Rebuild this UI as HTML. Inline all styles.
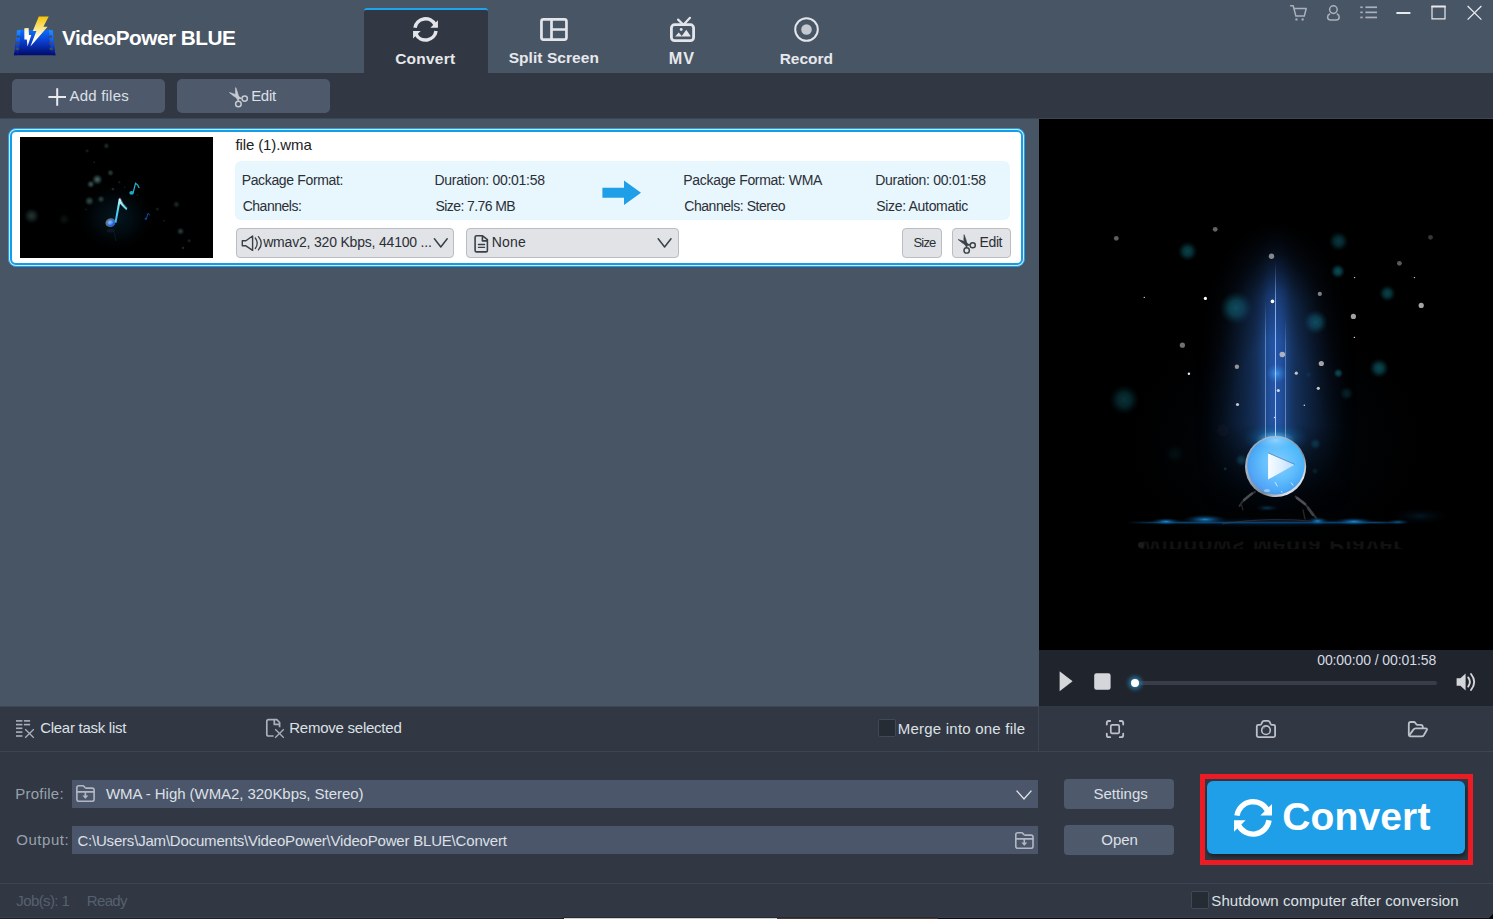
<!DOCTYPE html>
<html><head><meta charset="utf-8"><title>VideoPower BLUE</title>
<style>
html,body{margin:0;padding:0}
body{width:1493px;height:919px;position:relative;overflow:hidden;background:#313843;font-family:"Liberation Sans",sans-serif}
.a{position:absolute}
.t{position:absolute;white-space:pre;line-height:normal}
.btn{position:absolute;background:#4e596c;border-radius:5px}
.lbtn{position:absolute;background:#e1e3e7;border:1px solid #b9bdc4;border-radius:4px;box-sizing:border-box}
svg{position:absolute;left:0;top:0;overflow:visible}
</style></head>
<body>

<div id="titlebar">
<div class="a" style="left:0;top:0;width:1493px;height:73px;background:#485565"></div>
<div class="a" style="left:364px;top:8px;width:124px;height:65px;background:#313843;border-top:2px solid #1ca4ef;border-radius:3px 3px 0 0;box-sizing:border-box"></div>
<div class="t" style="left:62.00px;top:25.70px;font-size:20.8px;color:#ffffff;letter-spacing:-0.513px;font-weight:bold;">VideoPower BLUE</div>
<div class="t" style="left:395.20px;top:50.00px;font-size:15.5px;color:#e6e8ec;letter-spacing:0.233px;font-weight:bold;">Convert</div>
<div class="t" style="left:508.70px;top:49.00px;font-size:15.5px;color:#e6e8ec;letter-spacing:0.062px;font-weight:bold;">Split Screen</div>
<div class="t" style="left:668.80px;top:49.00px;font-size:16.2px;color:#e6e8ec;letter-spacing:1.016px;font-weight:bold;">MV</div>
<div class="t" style="left:779.70px;top:50.00px;font-size:15.5px;color:#e6e8ec;letter-spacing:-0.007px;font-weight:bold;">Record</div>
</div>
<div id="toolbar">
<div class="btn" style="left:12px;top:79px;width:153px;height:34px"></div>
<div class="btn" style="left:177px;top:79px;width:153px;height:34px"></div>
<div class="t" style="left:69.50px;top:87.00px;font-size:15px;color:#dde0e6;letter-spacing:0.209px;">Add files</div>
<div class="t" style="left:251.20px;top:87.00px;font-size:15px;color:#dde0e6;letter-spacing:-0.327px;">Edit</div>
</div>
<div id="tasklist">
<div class="a" style="left:0;top:118px;width:1493px;height:1px;background:#3c4654"></div>
<div class="a" style="left:0;top:119px;width:1039px;height:587px;background:#485565"></div>
<div class="a" style="left:0;top:706px;width:1038px;height:1px;background:#3c4654"></div>

<!-- file card -->
<div class="a" style="left:8px;top:128px;width:1017px;height:139px;box-sizing:border-box;border:1px solid #1e9fe8;border-radius:8px;background:#c9e8fa"></div>
<div class="a" style="left:10px;top:130px;width:1013px;height:135px;box-sizing:border-box;border:2px solid #169de7;border-radius:6px;background:#fff"></div>
<div class="a" style="left:20px;top:137px;width:193px;height:121px;background:#000;overflow:hidden"><svg width="193" height="121" viewBox="0 0 193 121">
<defs>
<radialGradient id="tbk"><stop offset="0" stop-color="#5c8a88"/><stop offset=".45" stop-color="#456b6a" stop-opacity=".75"/><stop offset="1" stop-color="#2a4645" stop-opacity="0"/></radialGradient>
<radialGradient id="tglow"><stop offset="0" stop-color="#0a3550" stop-opacity=".42"/><stop offset=".5" stop-color="#05202f" stop-opacity=".3"/><stop offset="1" stop-color="#000" stop-opacity="0"/></radialGradient>
<linearGradient id="nstem" x1="0" y1="1" x2="0" y2="0"><stop offset="0" stop-color="#38b8f0"/><stop offset=".6" stop-color="#56e0f6"/><stop offset="1" stop-color="#dffaff"/></linearGradient>
<radialGradient id="nhead" cx=".4" cy=".35"><stop offset="0" stop-color="#8fc4ff"/><stop offset=".7" stop-color="#3f86f0"/><stop offset="1" stop-color="#2a5fd0"/></radialGradient>
</defs>
<rect width="193" height="121" fill="#000"/>
<ellipse cx="96" cy="80" rx="40" ry="36" fill="url(#tglow)"/>
<circle cx="86.4" cy="8.9" r="3.4" fill="url(#tbk)" opacity="0.36"/><circle cx="67.1" cy="13.9" r="2.2" fill="url(#tbk)" opacity="0.28"/><circle cx="74.2" cy="25.2" r="1.5" fill="url(#tbk)" opacity="0.28"/><circle cx="90.5" cy="35.8" r="3.6" fill="url(#tbk)" opacity="0.48"/><circle cx="77.3" cy="42.5" r="5.6" fill="url(#tbk)" opacity="0.76"/><circle cx="70.8" cy="47.2" r="4.2" fill="url(#tbk)" opacity="0.64"/><circle cx="99.3" cy="45.2" r="1.8" fill="url(#tbk)" opacity="0.28"/><circle cx="92.9" cy="52.1" r="1.9" fill="url(#tbk)" opacity="0.44"/><circle cx="69.4" cy="64" r="5" fill="url(#tbk)" opacity="0.56"/><circle cx="81" cy="62.2" r="4" fill="url(#tbk)" opacity="0.48"/><circle cx="66" cy="72.5" r="1.5" fill="url(#tbk)" opacity="0.24"/><circle cx="11.6" cy="78.9" r="8" fill="url(#tbk)" opacity="0.4"/><circle cx="44.2" cy="82.3" r="6" fill="url(#tbk)" opacity="0.14"/><circle cx="156.4" cy="67.4" r="3.8" fill="url(#tbk)" opacity="0.32"/><circle cx="137.4" cy="72.1" r="2.2" fill="url(#tbk)" opacity="0.28"/><circle cx="144.2" cy="83.7" r="1.5" fill="url(#tbk)" opacity="0.24"/><circle cx="160.5" cy="94.3" r="4" fill="url(#tbk)" opacity="0.48"/><circle cx="169.1" cy="103.8" r="2.2" fill="url(#tbk)" opacity="0.32"/><circle cx="163" cy="110.9" r="1.9" fill="url(#tbk)" opacity="0.4"/><circle cx="117.4" cy="58.1" r="1.3" fill="url(#tbk)" opacity="0.24"/><circle cx="104.6" cy="50.2" r="1.2" fill="url(#tbk)" opacity="0.24"/>
<!-- small notes -->
<g fill="none" stroke="#1fb4cf" stroke-width="1.3" stroke-linecap="round"><path d="M113.200 55.400 L115.600 46.200 Q118.200 47.600 119 50.600"/></g>
<ellipse cx="111.600" cy="55.900" rx="2.300" ry="1.800" fill="#1aa9c6"/>
<path d="M126.600 81.200 L128 76.200 Q129.200 77 129.600 78.400" fill="none" stroke="#0c4fa6" stroke-width="1"/>
<ellipse cx="125.900" cy="81.700" rx="1.300" ry="1" fill="#0c4fa6"/>
<!-- main note -->
<ellipse cx="90.400" cy="85.600" rx="5" ry="4.300" fill="#6d6f74" transform="rotate(-18 90.4 85.6)"/>
<ellipse cx="91" cy="86" rx="4" ry="3.300" fill="url(#nhead)" transform="rotate(-18 91 86)"/>
<path d="M94.600 85.200 L98.800 61.600 L100.400 61.600 Q101.600 66.400 107.200 71.400 L106.400 73.200 Q102.200 69.400 100 66.800 L96.400 86 Z" fill="url(#nstem)"/>
<path d="M99 61.400 Q100.200 60.600 100.800 62 Q102 66.400 107.400 71.200" fill="none" stroke="#8d9297" stroke-width=".8" opacity=".8"/>
<ellipse cx="90.800" cy="93.600" rx="4.200" ry="2" fill="#0b1a24" opacity=".9"/>
<path d="M94 95 L96.200 104" stroke="#08131b" stroke-width="1.400"/>
</svg></div>
<div class="a" style="left:235px;top:161px;width:775px;height:59px;background:#e8f6fd;border-radius:6px"></div>
<div class="lbtn" style="left:236px;top:228px;width:218px;height:30px"></div>
<div class="lbtn" style="left:466px;top:228px;width:213px;height:30px"></div>
<div class="lbtn" style="left:902px;top:228px;width:40px;height:30px"></div>
<div class="lbtn" style="left:952px;top:228px;width:59px;height:30px"></div>

<div class="t" style="left:235.40px;top:135.50px;font-size:15px;color:#222;letter-spacing:-0.106px;">file (1).wma</div>
<div class="t" style="left:241.70px;top:172.00px;font-size:14px;color:#2b2f36;letter-spacing:-0.351px;">Package Format:</div>
<div class="t" style="left:242.70px;top:198.00px;font-size:14px;color:#2b2f36;letter-spacing:-0.481px;">Channels:</div>
<div class="t" style="left:434.50px;top:172.00px;font-size:14px;color:#2b2f36;letter-spacing:-0.277px;">Duration: 00:01:58</div>
<div class="t" style="left:435.50px;top:198.00px;font-size:14px;color:#2b2f36;letter-spacing:-0.584px;">Size: 7.76 MB</div>
<div class="t" style="left:683.30px;top:172.00px;font-size:14px;color:#2b2f36;letter-spacing:-0.315px;">Package Format: WMA</div>
<div class="t" style="left:684.30px;top:198.00px;font-size:14px;color:#2b2f36;letter-spacing:-0.460px;">Channels: Stereo</div>
<div class="t" style="left:875.20px;top:172.00px;font-size:14px;color:#2b2f36;letter-spacing:-0.259px;">Duration: 00:01:58</div>
<div class="t" style="left:876.20px;top:198.00px;font-size:14px;color:#2b2f36;letter-spacing:-0.312px;">Size: Automatic</div>
<div class="t" style="left:263.20px;top:233.50px;font-size:14px;color:#2b2f36;letter-spacing:-0.194px;">wmav2, 320 Kbps, 44100 ...</div>
<div class="t" style="left:491.70px;top:233.50px;font-size:14px;color:#2b2f36;letter-spacing:0.206px;">None</div>
<div class="t" style="left:913.40px;top:234.50px;font-size:13px;color:#2b2f36;letter-spacing:-0.786px;">Size</div>
<div class="t" style="left:979.60px;top:233.50px;font-size:14px;color:#2b2f36;letter-spacing:-0.411px;">Edit</div>
</div>
<div id="player">
<!-- preview -->
<div class="a" style="left:1039px;top:119px;width:454px;height:531px;background:#000;overflow:hidden"><div class="a" style="left:0;top:-1px;width:454px;height:532px"><svg width="454" height="532" viewBox="0 0 454 532">
<defs>
<radialGradient id="pbk"><stop offset="0" stop-color="#11707c"/><stop offset=".45" stop-color="#0e5c68" stop-opacity=".85"/><stop offset="1" stop-color="#06343c" stop-opacity="0"/></radialGradient>
<linearGradient id="bgs" x1="0" y1="0" x2="1" y2="0"><stop offset="0.0000" stop-color="#183868" stop-opacity="0.000"/><stop offset="0.0156" stop-color="#183868" stop-opacity="0.005"/><stop offset="0.0312" stop-color="#183868" stop-opacity="0.012"/><stop offset="0.0469" stop-color="#183868" stop-opacity="0.022"/><stop offset="0.0625" stop-color="#183868" stop-opacity="0.036"/><stop offset="0.0781" stop-color="#183868" stop-opacity="0.054"/><stop offset="0.0938" stop-color="#183868" stop-opacity="0.077"/><stop offset="0.1094" stop-color="#183868" stop-opacity="0.107"/><stop offset="0.1250" stop-color="#183868" stop-opacity="0.144"/><stop offset="0.1406" stop-color="#183868" stop-opacity="0.169"/><stop offset="0.1562" stop-color="#183868" stop-opacity="0.196"/><stop offset="0.1719" stop-color="#183868" stop-opacity="0.227"/><stop offset="0.1875" stop-color="#183868" stop-opacity="0.260"/><stop offset="0.2031" stop-color="#183868" stop-opacity="0.297"/><stop offset="0.2188" stop-color="#183868" stop-opacity="0.336"/><stop offset="0.2344" stop-color="#183868" stop-opacity="0.378"/><stop offset="0.2500" stop-color="#183868" stop-opacity="0.423"/><stop offset="0.2656" stop-color="#183868" stop-opacity="0.469"/><stop offset="0.2812" stop-color="#183868" stop-opacity="0.517"/><stop offset="0.2969" stop-color="#183868" stop-opacity="0.566"/><stop offset="0.3125" stop-color="#183868" stop-opacity="0.616"/><stop offset="0.3281" stop-color="#183868" stop-opacity="0.666"/><stop offset="0.3438" stop-color="#183868" stop-opacity="0.714"/><stop offset="0.3594" stop-color="#183868" stop-opacity="0.761"/><stop offset="0.3750" stop-color="#183868" stop-opacity="0.806"/><stop offset="0.3906" stop-color="#183868" stop-opacity="0.848"/><stop offset="0.4062" stop-color="#183868" stop-opacity="0.886"/><stop offset="0.4219" stop-color="#183868" stop-opacity="0.919"/><stop offset="0.4375" stop-color="#183868" stop-opacity="0.948"/><stop offset="0.4531" stop-color="#183868" stop-opacity="0.970"/><stop offset="0.4688" stop-color="#183868" stop-opacity="0.987"/><stop offset="0.4844" stop-color="#183868" stop-opacity="0.997"/><stop offset="0.5000" stop-color="#183868" stop-opacity="1.000"/><stop offset="0.5156" stop-color="#183868" stop-opacity="0.997"/><stop offset="0.5312" stop-color="#183868" stop-opacity="0.987"/><stop offset="0.5469" stop-color="#183868" stop-opacity="0.970"/><stop offset="0.5625" stop-color="#183868" stop-opacity="0.948"/><stop offset="0.5781" stop-color="#183868" stop-opacity="0.919"/><stop offset="0.5938" stop-color="#183868" stop-opacity="0.886"/><stop offset="0.6094" stop-color="#183868" stop-opacity="0.848"/><stop offset="0.6250" stop-color="#183868" stop-opacity="0.806"/><stop offset="0.6406" stop-color="#183868" stop-opacity="0.761"/><stop offset="0.6562" stop-color="#183868" stop-opacity="0.714"/><stop offset="0.6719" stop-color="#183868" stop-opacity="0.666"/><stop offset="0.6875" stop-color="#183868" stop-opacity="0.616"/><stop offset="0.7031" stop-color="#183868" stop-opacity="0.566"/><stop offset="0.7188" stop-color="#183868" stop-opacity="0.517"/><stop offset="0.7344" stop-color="#183868" stop-opacity="0.469"/><stop offset="0.7500" stop-color="#183868" stop-opacity="0.423"/><stop offset="0.7656" stop-color="#183868" stop-opacity="0.378"/><stop offset="0.7812" stop-color="#183868" stop-opacity="0.336"/><stop offset="0.7969" stop-color="#183868" stop-opacity="0.297"/><stop offset="0.8125" stop-color="#183868" stop-opacity="0.260"/><stop offset="0.8281" stop-color="#183868" stop-opacity="0.227"/><stop offset="0.8438" stop-color="#183868" stop-opacity="0.196"/><stop offset="0.8594" stop-color="#183868" stop-opacity="0.169"/><stop offset="0.8750" stop-color="#183868" stop-opacity="0.144"/><stop offset="0.8906" stop-color="#183868" stop-opacity="0.107"/><stop offset="0.9062" stop-color="#183868" stop-opacity="0.077"/><stop offset="0.9219" stop-color="#183868" stop-opacity="0.054"/><stop offset="0.9375" stop-color="#183868" stop-opacity="0.036"/><stop offset="0.9531" stop-color="#183868" stop-opacity="0.022"/><stop offset="0.9688" stop-color="#183868" stop-opacity="0.012"/><stop offset="0.9844" stop-color="#183868" stop-opacity="0.005"/><stop offset="1.0000" stop-color="#183868" stop-opacity="0.000"/></linearGradient>
<linearGradient id="bgc" x1="0" y1="0" x2="1" y2="0"><stop offset="0.0000" stop-color="#2457ac" stop-opacity="0.000"/><stop offset="0.0156" stop-color="#2457ac" stop-opacity="0.000"/><stop offset="0.0312" stop-color="#2457ac" stop-opacity="0.000"/><stop offset="0.0469" stop-color="#2457ac" stop-opacity="0.000"/><stop offset="0.0625" stop-color="#2457ac" stop-opacity="0.001"/><stop offset="0.0781" stop-color="#2457ac" stop-opacity="0.002"/><stop offset="0.0938" stop-color="#2457ac" stop-opacity="0.003"/><stop offset="0.1094" stop-color="#2457ac" stop-opacity="0.006"/><stop offset="0.1250" stop-color="#2457ac" stop-opacity="0.011"/><stop offset="0.1406" stop-color="#2457ac" stop-opacity="0.017"/><stop offset="0.1562" stop-color="#2457ac" stop-opacity="0.026"/><stop offset="0.1719" stop-color="#2457ac" stop-opacity="0.038"/><stop offset="0.1875" stop-color="#2457ac" stop-opacity="0.053"/><stop offset="0.2031" stop-color="#2457ac" stop-opacity="0.074"/><stop offset="0.2188" stop-color="#2457ac" stop-opacity="0.100"/><stop offset="0.2344" stop-color="#2457ac" stop-opacity="0.133"/><stop offset="0.2500" stop-color="#2457ac" stop-opacity="0.172"/><stop offset="0.2656" stop-color="#2457ac" stop-opacity="0.218"/><stop offset="0.2812" stop-color="#2457ac" stop-opacity="0.271"/><stop offset="0.2969" stop-color="#2457ac" stop-opacity="0.329"/><stop offset="0.3125" stop-color="#2457ac" stop-opacity="0.393"/><stop offset="0.3281" stop-color="#2457ac" stop-opacity="0.459"/><stop offset="0.3438" stop-color="#2457ac" stop-opacity="0.527"/><stop offset="0.3594" stop-color="#2457ac" stop-opacity="0.594"/><stop offset="0.3750" stop-color="#2457ac" stop-opacity="0.658"/><stop offset="0.3906" stop-color="#2457ac" stop-opacity="0.717"/><stop offset="0.4062" stop-color="#2457ac" stop-opacity="0.769"/><stop offset="0.4219" stop-color="#2457ac" stop-opacity="0.813"/><stop offset="0.4375" stop-color="#2457ac" stop-opacity="0.848"/><stop offset="0.4531" stop-color="#2457ac" stop-opacity="0.874"/><stop offset="0.4688" stop-color="#2457ac" stop-opacity="0.890"/><stop offset="0.4844" stop-color="#2457ac" stop-opacity="0.898"/><stop offset="0.5000" stop-color="#2457ac" stop-opacity="0.900"/><stop offset="0.5156" stop-color="#2457ac" stop-opacity="0.898"/><stop offset="0.5312" stop-color="#2457ac" stop-opacity="0.890"/><stop offset="0.5469" stop-color="#2457ac" stop-opacity="0.874"/><stop offset="0.5625" stop-color="#2457ac" stop-opacity="0.848"/><stop offset="0.5781" stop-color="#2457ac" stop-opacity="0.813"/><stop offset="0.5938" stop-color="#2457ac" stop-opacity="0.769"/><stop offset="0.6094" stop-color="#2457ac" stop-opacity="0.717"/><stop offset="0.6250" stop-color="#2457ac" stop-opacity="0.658"/><stop offset="0.6406" stop-color="#2457ac" stop-opacity="0.594"/><stop offset="0.6562" stop-color="#2457ac" stop-opacity="0.527"/><stop offset="0.6719" stop-color="#2457ac" stop-opacity="0.459"/><stop offset="0.6875" stop-color="#2457ac" stop-opacity="0.393"/><stop offset="0.7031" stop-color="#2457ac" stop-opacity="0.329"/><stop offset="0.7188" stop-color="#2457ac" stop-opacity="0.271"/><stop offset="0.7344" stop-color="#2457ac" stop-opacity="0.218"/><stop offset="0.7500" stop-color="#2457ac" stop-opacity="0.172"/><stop offset="0.7656" stop-color="#2457ac" stop-opacity="0.133"/><stop offset="0.7812" stop-color="#2457ac" stop-opacity="0.100"/><stop offset="0.7969" stop-color="#2457ac" stop-opacity="0.074"/><stop offset="0.8125" stop-color="#2457ac" stop-opacity="0.053"/><stop offset="0.8281" stop-color="#2457ac" stop-opacity="0.038"/><stop offset="0.8438" stop-color="#2457ac" stop-opacity="0.026"/><stop offset="0.8594" stop-color="#2457ac" stop-opacity="0.017"/><stop offset="0.8750" stop-color="#2457ac" stop-opacity="0.011"/><stop offset="0.8906" stop-color="#2457ac" stop-opacity="0.006"/><stop offset="0.9062" stop-color="#2457ac" stop-opacity="0.003"/><stop offset="0.9219" stop-color="#2457ac" stop-opacity="0.002"/><stop offset="0.9375" stop-color="#2457ac" stop-opacity="0.001"/><stop offset="0.9531" stop-color="#2457ac" stop-opacity="0.000"/><stop offset="0.9688" stop-color="#2457ac" stop-opacity="0.000"/><stop offset="0.9844" stop-color="#2457ac" stop-opacity="0.000"/><stop offset="1.0000" stop-color="#2457ac" stop-opacity="0.000"/></linearGradient>
<linearGradient id="vfade" x1="0" y1="0" x2="0" y2="1"><stop offset="0" stop-color="#fff" stop-opacity="0"/><stop offset=".06" stop-color="#fff" stop-opacity=".35"/><stop offset=".16" stop-color="#fff" stop-opacity=".8"/><stop offset=".26" stop-color="#fff" stop-opacity="1"/><stop offset=".7" stop-color="#fff" stop-opacity="1"/><stop offset=".78" stop-color="#fff" stop-opacity=".6"/><stop offset=".86" stop-color="#fff" stop-opacity=".25"/><stop offset=".93" stop-color="#fff" stop-opacity=".07"/><stop offset="1" stop-color="#fff" stop-opacity="0"/></linearGradient>
<radialGradient id="dome"><stop offset="0" stop-color="#fff" stop-opacity="1"/><stop offset=".5" stop-color="#fff" stop-opacity="1"/><stop offset=".68" stop-color="#fff" stop-opacity=".72"/><stop offset=".84" stop-color="#fff" stop-opacity=".28"/><stop offset="1" stop-color="#fff" stop-opacity="0"/></radialGradient>
<mask id="mdome" maskUnits="userSpaceOnUse" x="0" y="0" width="454" height="532"><ellipse cx="236.5" cy="345" rx="100" ry="245" fill="url(#dome)"/></mask>
<mask id="mfade" maskUnits="userSpaceOnUse" x="0" y="0" width="454" height="532"><rect x="152.5" y="96" width="168" height="300" fill="url(#vfade)"/></mask>
<linearGradient id="lfade" x1="0" y1="0" x2="0" y2="1"><stop offset="0" stop-color="#a8c8ff" stop-opacity="0"/><stop offset=".25" stop-color="#a8c8ff" stop-opacity=".75"/><stop offset="1" stop-color="#c4dcff" stop-opacity=".9"/></linearGradient>
<radialGradient id="ball" cx=".54" cy=".46" r=".58"><stop offset="0" stop-color="#8ccfff"/><stop offset=".5" stop-color="#62bffd"/><stop offset=".82" stop-color="#48a8f6"/><stop offset="1" stop-color="#3590ea"/></radialGradient>
<linearGradient id="ballc" x1="0" y1="1" x2="1" y2="0"><stop offset="0" stop-color="#7a9cf6" stop-opacity=".55"/><stop offset=".5" stop-color="#5ab4fb" stop-opacity="0"/><stop offset="1" stop-color="#3fd0ff" stop-opacity=".55"/></linearGradient>
<linearGradient id="rim" x1="0" y1="0" x2="1" y2="1"><stop offset="0" stop-color="#8a98a8"/><stop offset=".3" stop-color="#aab4be"/><stop offset=".62" stop-color="#7c8690"/><stop offset=".82" stop-color="#e4e8ec"/><stop offset="1" stop-color="#5a5e64"/></linearGradient>
<linearGradient id="tri" x1="0" y1="0" x2="1" y2="0"><stop offset="0" stop-color="#ffffff" stop-opacity=".95"/><stop offset=".5" stop-color="#e4f2ff" stop-opacity=".92"/><stop offset="1" stop-color="#bfe0ff" stop-opacity=".9"/></linearGradient>
<radialGradient id="hglow"><stop offset="0" stop-color="#2094dc" stop-opacity=".9"/><stop offset=".45" stop-color="#0e62a0" stop-opacity=".5"/><stop offset="1" stop-color="#052848" stop-opacity="0"/></radialGradient><radialGradient id="hsoft"><stop offset="0" stop-color="#0a3c6c" stop-opacity=".5"/><stop offset="1" stop-color="#041830" stop-opacity="0"/></radialGradient><linearGradient id="hline" x1="0" y1="0" x2="1" y2="0"><stop offset="0" stop-color="#0c5a94" stop-opacity="0"/><stop offset=".12" stop-color="#0c5a94" stop-opacity=".8"/><stop offset=".88" stop-color="#0c5a94" stop-opacity=".8"/><stop offset="1" stop-color="#0c5a94" stop-opacity="0"/></linearGradient>
<radialGradient id="topg"><stop offset="0" stop-color="#c8ecff" stop-opacity=".55"/><stop offset="1" stop-color="#8fd0ff" stop-opacity="0"/></radialGradient><radialGradient id="spot"><stop offset="0" stop-color="#4aa4f4" stop-opacity=".8"/><stop offset="1" stop-color="#2a7ae0" stop-opacity="0"/></radialGradient>
<radialGradient id="cyg"><stop offset="0" stop-color="#2aa0e0" stop-opacity=".75"/><stop offset=".6" stop-color="#1470b0" stop-opacity=".3"/><stop offset="1" stop-color="#0a4070" stop-opacity="0"/></radialGradient>
<radialGradient id="amb"><stop offset="0" stop-color="#061626" stop-opacity=".45"/><stop offset="1" stop-color="#020810" stop-opacity="0"/></radialGradient>
</defs>
<rect width="454" height="532" fill="#000"/>
<ellipse cx="236.5" cy="322" rx="150" ry="120" fill="url(#amb)"/>
<circle cx="148.6" cy="133.3" r="10" fill="url(#pbk)" opacity="0.6"/><circle cx="299.6" cy="123.3" r="10" fill="url(#pbk)" opacity="0.5"/><circle cx="298.8" cy="153.3" r="7.5" fill="url(#pbk)" opacity="0.7"/><circle cx="348.4" cy="175.4" r="8.5" fill="url(#pbk)" opacity="0.6"/><circle cx="197.4" cy="190.1" r="17" fill="url(#pbk)" opacity="0.75"/><circle cx="276.3" cy="204.2" r="12.5" fill="url(#pbk)" opacity="0.75"/><circle cx="340.1" cy="250.2" r="10" fill="url(#pbk)" opacity="0.65"/><circle cx="299.3" cy="255.2" r="5" fill="url(#pbk)" opacity="0.7"/><circle cx="85.3" cy="281.8" r="15" fill="url(#pbk)" opacity="0.45"/><circle cx="307.6" cy="275.5" r="7" fill="url(#pbk)" opacity="0.3"/><circle cx="269.5" cy="256.7" r="3.5" fill="url(#pbk)" opacity="0.3"/><circle cx="276.3" cy="325.8" r="6" fill="url(#pbk)" opacity="0.45"/><circle cx="202.4" cy="342" r="6.5" fill="url(#pbk)" opacity="0.5"/><circle cx="136" cy="335.8" r="10" fill="url(#pbk)" opacity="0.12"/><circle cx="186.2" cy="350.8" r="2" fill="url(#pbk)" opacity="0.5"/><circle cx="276" cy="353" r="3.5" fill="url(#pbk)" opacity="0.25"/>
<circle cx="183.6" cy="312.5" r="6" fill="#101014" opacity=".5"/>
<!-- beam -->
<g mask="url(#mdome)"><g mask="url(#mfade)"><rect x="152.5" y="96" width="168" height="300" fill="url(#bgs)"/><rect x="206.5" y="96" width="60" height="300" fill="url(#bgc)"/></g></g>
<circle cx="237.5" cy="255.5" r="10" fill="url(#spot)"/>
<ellipse cx="236.5" cy="320" rx="34" ry="16" fill="url(#cyg)"/>
<rect x="236.0" y="144" width="1" height="176" fill="url(#lfade)"/>
<rect x="226.1" y="182" width=".8" height="142" fill="url(#lfade)" opacity=".7"/>
<rect x="246.1" y="200" width=".8" height="124" fill="url(#lfade)" opacity=".65"/>
<circle cx="77.3" cy="120.3" r="2.4" fill="#5e5e5e"/><circle cx="176.2" cy="111.3" r="2.4" fill="#646464"/><circle cx="232.5" cy="138.3" r="2.7" fill="#86868c"/><circle cx="391.5" cy="119.3" r="2.4" fill="#363636"/><circle cx="360.4" cy="145.3" r="2.4" fill="#5a5a5a"/><circle cx="315.6" cy="159.6" r="0.7" fill="#ddd"/><circle cx="375.4" cy="159.6" r="0.7" fill="#ddd"/><circle cx="105.3" cy="179.4" r="0.7" fill="#ccc"/><circle cx="166.4" cy="180.4" r="1.6" fill="#fff"/><circle cx="233.5" cy="183.4" r="1.8" fill="#fff"/><circle cx="280.8" cy="175.9" r="2.1" fill="#808080"/><circle cx="382.2" cy="187.4" r="2.6" fill="#a4a4a4"/><circle cx="314.4" cy="198.4" r="2.6" fill="#a2a2a2"/><circle cx="315.4" cy="219.4" r="0.7" fill="#ddd"/><circle cx="143.4" cy="227.2" r="2.6" fill="#707070"/><circle cx="243.3" cy="236.5" r="2.8" fill="#aeb2c0"/><circle cx="282.3" cy="245.5" r="2.6" fill="#a4a4a4"/><circle cx="197.9" cy="248.7" r="2.2" fill="#949494"/><circle cx="149.9" cy="255.7" r="1.2" fill="#f0f0f0"/><circle cx="257.3" cy="255.2" r="1.6" fill="#c6c6c6"/><circle cx="239.3" cy="272.5" r="1.6" fill="#d0d4e0"/><circle cx="279.3" cy="270.3" r="1.6" fill="#c6c6c6"/><circle cx="198.5" cy="286.5" r="1.6" fill="#c6c6c6"/><circle cx="265.3" cy="287.3" r="0.7" fill="#cfe"/><circle cx="235.5" cy="299.5" r="0.7" fill="#dde"/>
<!-- horizon -->
<rect x="88" y="403.70000000000005" width="282" height="1.700" fill="url(#hline)"/>
<ellipse cx="229" cy="404.5" rx="150" ry="5" fill="url(#hsoft)"/>
<ellipse cx="127" cy="403.5" rx="15" ry="3.600" fill="url(#hglow)"/>
<ellipse cx="166" cy="401.5" rx="22" ry="5" fill="url(#hglow)"/>
<ellipse cx="228" cy="390" rx="12" ry="3.500" fill="url(#hglow)" opacity=".4"/>
<ellipse cx="278.5" cy="403" rx="11" ry="4.200" fill="url(#hglow)"/>
<ellipse cx="315" cy="403.5" rx="20" ry="4" fill="url(#hglow)"/>
<ellipse cx="359" cy="404" rx="12" ry="3" fill="url(#hglow)" opacity=".6"/>
<ellipse cx="381" cy="398" rx="28" ry="8" fill="url(#hglow)" opacity=".16"/>
<path d="M183 406 Q226 399 271 403" stroke="#3c4248" stroke-width="1.200" fill="none" opacity=".55"/>
<!-- splash -->
<g fill="none" stroke-linecap="round">
<path d="M200.5 388 Q205 380 216 373.8" stroke="#2c2e32" stroke-width="2"/>
<path d="M205 382 L213 375.5" stroke-width="2.400" stroke="#4a4d52"/>
<path d="M202 385 L204 392" stroke-width="1.200" stroke="#26282c"/>
<path d="M256.5999999999999 378.6 Q267 385 277 400" stroke="#303236" stroke-width="2"/>
<path d="M258 380 L266 386" stroke-width="2.600" stroke="#4c5056"/>
<path d="M269 390 L274 397" stroke-width="2.400" stroke="#3e4248"/>
<path d="M264 392 L266 401" stroke-width="1.400" stroke="#24262a"/>
</g>
<!-- ball -->
<circle cx="236.5999999999999" cy="348.5" r="30.600" fill="url(#rim)"/>
<circle cx="236.9000000000001" cy="347.8" r="28.600" fill="url(#ball)"/>
<circle cx="236.9000000000001" cy="347.8" r="28.600" fill="url(#ballc)"/>
<ellipse cx="236.5" cy="322" rx="20" ry="9" fill="url(#topg)"/>
<path d="M229.0999999999999 334.9 L256 346.5 L229.0999999999999 361.5 Z" fill="url(#tri)"/>
<path d="M229.0999999999999 334.9 L256 346.5" stroke="#3f78b8" stroke-width=".9" opacity=".8" fill="none"/>
<path d="M236 364 l2.500 4.500 M252 364.5 l2.200 3 M242.5 373 l.5 1.500" stroke="#eaf6ff" stroke-width=".9" opacity=".85" fill="none"/>
<ellipse cx="228" cy="372.5" rx="3" ry="1.600" fill="#d6ecff" opacity=".5"/>
<!-- mirrored caption (very dim) -->
<clipPath id="capclip"><rect x="89" y="423.5" width="290" height="7.500"/></clipPath>
<g clip-path="url(#capclip)"><text x="232" y="0" text-anchor="middle" font-family="Liberation Sans, sans-serif" font-weight="bold" font-size="23" fill="#111" transform="translate(0 420) scale(1 -1)" letter-spacing=".8">Windows Media Player</text></g>
<circle cx="102" cy="427" r="3" fill="#1c1c1c"/>
</svg></div></div>
<div class="a" style="left:1039px;top:650px;width:454px;height:56px;background:#20242d"></div>
<div class="a" style="left:1134px;top:681px;width:303px;height:4px;border-radius:2px;background:#373d49"></div>
<div class="a" style="left:1125px;top:673px;width:20px;height:20px;border-radius:10px;background:radial-gradient(circle,rgba(90,200,240,.95) 0,rgba(40,140,190,.5) 35%,rgba(30,110,160,.12) 60%,rgba(30,110,160,0) 85%)"></div>
<div class="a" style="left:1131px;top:679px;width:8px;height:8px;border-radius:4px;background:#fff"></div>

<div class="t" style="left:1317.20px;top:652.00px;font-size:14px;color:#d6dae2;letter-spacing:-0.093px;">00:00:00 / 00:01:58</div>
</div>
<div id="listbar">
<!-- bottom bar lines -->
<div class="a" style="left:0;top:751px;width:1493px;height:1px;background:#3c4653"></div>
<div class="a" style="left:1038px;top:706px;width:1px;height:45px;background:#3c4653"></div>
<div class="a" style="left:878px;top:719px;width:18px;height:18px;box-sizing:border-box;border:1px solid #404a57;border-radius:2px;background:#262c34"></div>

<div class="t" style="left:40.20px;top:719.20px;font-size:15px;color:#dde0e6;letter-spacing:-0.275px;">Clear task list</div>
<div class="t" style="left:289.20px;top:719.20px;font-size:15px;color:#dde0e6;letter-spacing:-0.239px;">Remove selected</div>
<div class="t" style="left:897.80px;top:719.90px;font-size:15px;color:#dde0e6;letter-spacing:0.219px;">Merge into one file</div>
</div>
<div id="output">
<!-- profile / output -->
<div class="a" style="left:72px;top:780px;width:966px;height:28px;background:#4b566a"></div>
<div class="a" style="left:72px;top:826px;width:966px;height:28px;background:#4b566a"></div>
<div class="btn" style="left:1064px;top:779px;width:110px;height:30px;border-radius:4px"></div>
<div class="btn" style="left:1064px;top:825px;width:110px;height:30px;border-radius:4px"></div>

<!-- convert button -->
<div class="a" style="left:1200px;top:774px;width:273px;height:91px;box-sizing:border-box;border:5px solid #ed1c24"></div>
<div class="a" style="left:1207px;top:781px;width:258px;height:73px;border-radius:6px;background:#1e9fe8;box-shadow:1px 3px 4px rgba(0,0,0,.45)"></div>

<div class="t" style="left:15.30px;top:784.80px;font-size:15px;color:#98a1ae;letter-spacing:0.226px;">Profile:</div>
<div class="t" style="left:16.30px;top:831.20px;font-size:15px;color:#98a1ae;letter-spacing:0.528px;">Output:</div>
<div class="t" style="left:106.00px;top:784.80px;font-size:15px;color:#dde0e6;letter-spacing:-0.054px;">WMA - High (WMA2, 320Kbps, Stereo)</div>
<div class="t" style="left:77.40px;top:831.80px;font-size:15px;color:#dde0e6;letter-spacing:-0.195px;">C:\Users\Jam\Documents\VideoPower\VideoPower BLUE\Convert</div>
<div class="t" style="left:1093.40px;top:784.80px;font-size:15px;color:#dde0e6;letter-spacing:0.029px;">Settings</div>
<div class="t" style="left:1101.30px;top:830.50px;font-size:15px;color:#dde0e6;letter-spacing:-0.084px;">Open</div>
<div class="t" style="left:1282.30px;top:794.70px;font-size:39px;color:#ffffff;letter-spacing:0.122px;font-weight:bold;">Convert</div>
</div>
<div id="statusbar">
<!-- status -->
<div class="a" style="left:0;top:883px;width:1493px;height:1px;background:#3c4653"></div>
<div class="a" style="left:1191px;top:891px;width:18px;height:18px;box-sizing:border-box;border:1px solid #404a57;border-radius:2px;background:#262c34"></div>
<div class="a" style="left:0;top:917px;width:1493px;height:1px;background:#363f4b"></div>
<div class="a" style="left:563px;top:917px;width:375px;height:1px;background:#262c36"></div>
<div class="a" style="left:1488px;top:914px;width:0;height:0;border-left:5px solid transparent;border-bottom:5px solid #060606"></div>
<div class="a" style="left:0;top:918px;width:1493px;height:1px;background:#1c2027"></div>
<div class="a" style="left:564px;top:918px;width:213px;height:1px;background:#cfcfcd"></div>
<div class="a" style="left:777px;top:918px;width:161px;height:1px;background:#4e382e"></div>
<div class="a" style="left:938px;top:918px;width:555px;height:1px;background:#0c0d10"></div>

<div class="t" style="left:16.30px;top:891.70px;font-size:15px;color:#566070;letter-spacing:-0.601px;">Job(s): 1</div>
<div class="t" style="left:86.80px;top:891.70px;font-size:15px;color:#566070;letter-spacing:-0.665px;">Ready</div>
<div class="t" style="left:1211.30px;top:892.00px;font-size:15px;color:#dde0e6;letter-spacing:0.092px;">Shutdown computer after conversion</div>
</div>
<svg width="1493" height="919" viewBox="0 0 1493 919">
<defs>
<linearGradient id="film" x1="0" y1="0" x2="0" y2="1"><stop offset="0" stop-color="#0a72ff"/><stop offset=".45" stop-color="#0a3fd0"/><stop offset="1" stop-color="#020a68"/></linearGradient>
<linearGradient id="fside" x1="0" y1="0" x2="0" y2="1"><stop offset="0" stop-color="#2a98ff" stop-opacity=".75"/><stop offset=".6" stop-color="#1a6cff" stop-opacity=".4"/><stop offset="1" stop-color="#0a30c0" stop-opacity=".1"/></linearGradient><linearGradient id="bolt" x1="0" y1="0" x2="0" y2="1"><stop offset="0" stop-color="#f6c400"/><stop offset=".35" stop-color="#fbe27a"/><stop offset=".7" stop-color="#fffbe6"/><stop offset="1" stop-color="#ffffff"/></linearGradient>
<linearGradient id="bolt2" x1="0" y1="0" x2="0" y2="1"><stop offset="0" stop-color="#fdf0b8"/><stop offset=".5" stop-color="#ffffff"/><stop offset="1" stop-color="#ffffff"/></linearGradient>
</defs>

<!-- logo -->
<g>
<path d="M17 30.2 L19.6 30.2 L19.6 29.4 L23 29.4 L23 30.2 L47 30.2 L47 29.4 L50.2 29.4 L50.2 30.2 L52.8 30.2 L55.2 54.4 L53 55.3 L16.4 55.3 L14.2 54.4 Z" fill="url(#film)"/>
<path d="M17 30.2 L20.6 30.2 L18.6 55 L14.6 54.4 Z M49 30.2 L52.8 30.2 L55 54.4 L51 55 Z" fill="url(#fside)"/>
<path d="M14.400 52.600 L16.200 52.600 L16.600 55.300 L13.800 55.600 Z M53.200 52.600 L55 52.600 L55.600 55.600 L52.800 55.300 Z" fill="#03107a"/>
<g fill="#3d4a66"><rect x="16.6" y="35.4" width="3.5" height="2.4" rx="1"/><rect x="16" y="41.8" width="3.6" height="2.4" rx="1"/><rect x="15.6" y="47.6" width="3.6" height="2.5" rx="1"/>
<rect x="48.6" y="35.4" width="3.5" height="2.4" rx="1"/><rect x="49" y="41.8" width="3.6" height="2.4" rx="1"/><rect x="49.4" y="47.6" width="3.6" height="2.5" rx="1"/></g>
<path d="M38.8 16.5 L48.7 16.5 L43.4 26.8 L47.6 26.8 L30.4 46.4 L36.4 31 L32.8 31 Z" fill="url(#bolt)"/>
<path d="M24.3 28.3 L28.6 28.1 L29 34.9 L31.3 34.9 L27.5 46.4 L26.8 39.4 L24.4 39.4 Z" fill="url(#bolt2)"/>
</g>

<!-- tab icons -->
<g transform="translate(425.5 29.4)"><path d="M-10.52 -1.55 A10.63 10.63 0 0 1 9.47 -4.83" fill="none" stroke="#e3e5ea" stroke-width="3.53"/><path d="M12.46 -9.11 L12.46 -1.55 L4.84 -1.55 Z" fill="#e3e5ea"/><g transform="rotate(180)"><path d="M-10.52 -1.55 A10.63 10.63 0 0 1 9.47 -4.83" fill="none" stroke="#e3e5ea" stroke-width="3.53"/><path d="M12.46 -9.11 L12.46 -1.55 L4.84 -1.55 Z" fill="#e3e5ea"/></g></g>
<g fill="none" stroke="#e3e5ea" stroke-width="2.7"><rect x="541.45" y="19.4" width="25" height="20.15" rx="2"/><path d="M551.5 19.4 V39.5 M551.5 29.5 H566.4"/></g>
<g fill="none" stroke="#e3e5ea" stroke-width="2.8"><rect x="671.4" y="24.7" width="22.2" height="15.9" rx="3.2"/></g>
<path d="M678.1 19.6 L682.6 24 M690 17.8 L684.2 24" stroke="#e3e5ea" stroke-width="2.2" stroke-linecap="round" fill="none"/>
<circle cx="681.2" cy="29.5" r="1.4" fill="#e3e5ea"/>
<path d="M675.2 36.6 L678.7 32.4 L681.8 36.1 L686.3 29.8 L690.9 36.6 Z" fill="#e3e5ea"/>
<circle cx="806.5" cy="29.5" r="11.3" fill="none" stroke="#e3e5ea" stroke-width="2"/>
<circle cx="806.5" cy="29.5" r="5.3" fill="#c3c8d1"/>

<!-- window controls -->
<g fill="none" stroke="#aab0bc" stroke-width="1.5" stroke-linejoin="round" stroke-linecap="round">
<path d="M1290.6 5.8 L1293.2 5.8 L1293.9 8.5 L1295.9 16.1 L1304.3 16.1 L1306.2 8.5 L1293.9 8.5"/>
<circle cx="1333.4" cy="9.6" r="3.8"/>
<path d="M1329.6 14 Q1327.6 15 1327.6 17 Q1327.6 20 1330.6 20 L1336.2 20 Q1339.2 20 1339.2 17 Q1339.2 15 1337.2 14"/>
</g>
<g fill="#aab0bc"><rect x="1295.4" y="18.4" width="2.1" height="2.1"/><rect x="1301.6" y="18.4" width="2.1" height="2.1"/>
<rect x="1360.3" y="6.4" width="2.4" height="1.7"/><rect x="1360.3" y="11.5" width="2.4" height="1.7"/><rect x="1360.3" y="16.6" width="2.4" height="1.7"/>
<rect x="1365.4" y="6.4" width="11.6" height="1.7"/><rect x="1365.4" y="11.5" width="11.6" height="1.7"/><rect x="1365.4" y="16.6" width="11.6" height="1.7"/></g>
<rect x="1396.4" y="12" width="14" height="2" fill="#e8eaee"/>
<path d="M1432 6.5 H1445 V18.8 H1432 Z" fill="none" stroke="#e8eaee" stroke-width="1.2"/><rect x="1431.4" y="5.5" width="14.2" height="2" fill="#e8eaee"/>
<path d="M1467.6 6 L1481.4 19.6 M1481.4 6 L1467.6 19.6" stroke="#e8eaee" stroke-width="1.3" fill="none"/>

<!-- toolbar icons -->
<path d="M48.4 97 H66 M57.2 88.3 V105.7" stroke="#e8eaee" stroke-width="2" fill="none"/>
<g transform="translate(225.2,87.3) scale(1.0)" fill="none" stroke="#c6cad2" stroke-width="1.5">
<path d="M10.5 0.300 L12.4 5.5 L13.700 10.6 L11.5 11.2 L10.3 5.6 Z" fill="#c6cad2" stroke="#c6cad2" stroke-width=".7" stroke-linejoin="round"/>
<path d="M4.300 5.300 L9.600 7 L14.200 9.500 L13.200 11.500 L8.500 8.800 Z" fill="#c6cad2" stroke="#c6cad2" stroke-width=".7" stroke-linejoin="round"/>
<path d="M12.6 10.4 L13.2 13.4 M13.4 10.6 L16.4 11" stroke-width="1.8"/>
<circle cx="13.2" cy="16.7" r="2.8"/>
<circle cx="19.5" cy="11.3" r="2.7"/>
</g>

<!-- card icons -->
<path d="M602.4 187.8 H624 V180.4 L641 192.7 L624 205 V197.7 H602.4 Z" fill="#1e9fe8"/>
<g fill="none" stroke="#3a4048" stroke-width="1.4" stroke-linejoin="round" stroke-linecap="round">
<path d="M242.3 240.7 H245.9 L252.6 236 V250.4 L245.9 245.8 H242.3 Z"/>
<path d="M255.3 238 Q259.2 243.2 255.3 248.5 M258.4 236.6 Q264.2 243.2 258.4 249.9" stroke-width="1.3"/>
<path d="M434.4 238.8 L440.8 247 L447.2 238.8 M658.2 238.8 L664.6 247 L671 238.8" stroke-width="1.5"/>
<path d="M476.6 235.8 H482.6 L487.4 239.6 V250.4 Q487.4 251.9 485.9 251.9 H476.6 Q475.1 251.9 475.1 250.4 V237.3 Q475.1 235.8 476.6 235.8 Z M482.4 236 V240.9 H487.2" stroke-width="1.6"/>
<path d="M478.4 244.5 H484.6 M478.4 247.3 H484.6" stroke-width="1.3"/>
</g>
<g transform="translate(954,234.4) scale(0.96)" fill="none" stroke="#3a4048" stroke-width="1.5">
<path d="M10.5 0.300 L12.4 5.5 L13.700 10.6 L11.5 11.2 L10.3 5.6 Z" fill="#3a4048" stroke="#3a4048" stroke-width=".7" stroke-linejoin="round"/>
<path d="M4.300 5.300 L9.600 7 L14.200 9.500 L13.200 11.500 L8.500 8.800 Z" fill="#3a4048" stroke="#3a4048" stroke-width=".7" stroke-linejoin="round"/>
<path d="M12.6 10.4 L13.2 13.4 M13.4 10.6 L16.4 11" stroke-width="1.8"/>
<circle cx="13.2" cy="16.7" r="2.8"/>
<circle cx="19.5" cy="11.3" r="2.7"/>
</g>

<!-- player icons -->
<path d="M1059.6 671.2 L1072.6 681.2 L1059.6 691.2 Z" fill="#d4d6da"/>
<rect x="1094.2" y="673.3" width="16.4" height="16.4" rx="2.2" fill="#d4d6da"/>
<path d="M1456.6 678.2 H1460.4 L1465.6 673.6 V690.4 L1460.4 685.8 H1456.6 Z" fill="#d4d6da"/>
<path d="M1468.2 677.4 Q1471.6 682 1468.2 686.6 M1471 674 Q1477.4 682 1471 690" fill="none" stroke="#d4d6da" stroke-width="1.9" stroke-linecap="round"/>
<g fill="none" stroke="#bcc1ca" stroke-width="1.8" stroke-linecap="round" stroke-linejoin="round">
<path d="M1106.8 724.6 V723 Q1106.8 721 1108.8 721 H1110.2 M1119.8 721 H1121.2 Q1123.2 721 1123.2 723 V724.6 M1123.2 733.6 V735.2 Q1123.2 737.2 1121.2 737.2 H1119.8 M1110.2 737.2 H1108.8 Q1106.8 737.2 1106.8 735.2 V733.6"/>
<rect x="1110.8" y="724.9" width="8.4" height="8.4" rx="1.4" stroke-width="1.7"/>
<path d="M1256.8 726.4 Q1256.8 724.9 1258.3 724.9 H1260 Q1261 724.9 1261.4 724 L1262.2 722.2 Q1262.8 720.9 1264 720.9 H1268 Q1269.200 720.9 1269.8 722.2 L1270.6 724 Q1271 724.9 1272 724.9 H1273.600 Q1275.1 724.9 1275.1 726.4 V735.6 Q1275.1 737.1 1273.600 737.1 H1258.3 Q1256.8 737.1 1256.8 735.6 Z"/>
<circle cx="1266" cy="730.2" r="4.3" stroke-width="1.6"/>
<path d="M1408.8 734.800 V724 Q1408.8 722 1410.8 722 H1413.800 Q1414.800 722 1415.4 722.9 L1416.1 724 Q1416.6 724.8 1417.6 724.8 H1420.600 Q1422.800 724.8 1422.800 727 V728.2"/>
<path d="M1409.200 735.4 L1413.400 729.600 Q1414.300 728.400 1415.800 728.400 H1425.600 Q1427.800 728.400 1426.700 730.300 L1423.800 735.200 Q1423.100 736.300 1421.800 736.300 H1410.600 Q1408.800 736.300 1409.200 735.400 Z"/>
</g>
<path d="M1263.400 728.6 Q1264.000 727.600 1265.200 727.400" fill="none" stroke="#6f7684" stroke-width="1.1"/>

<!-- bottom bar icons -->
<g fill="#aab0bc">
<rect x="16" y="720.100" width="6.400" height="1.600"/><rect x="23.900" y="720.100" width="6.200" height="1.600"/>
<rect x="16" y="723.800" width="6.400" height="1.600"/><rect x="23.900" y="723.800" width="6.200" height="1.600"/>
<rect x="16" y="727.500" width="6.400" height="1.600"/><rect x="16" y="731.300" width="6.400" height="1.600"/><rect x="16" y="735.200" width="6.400" height="1.600"/>
</g>
<path d="M25.200 729.200 L33.800 737.700 M33.800 729.200 L25.200 737.700" stroke="#aab0bc" stroke-width="1.300" fill="none"/>
<path d="M273.600 736 H268.600 Q266.800 736 266.800 734.200 V721.500 Q266.800 719.700 268.600 719.700 H276.800 L279.600 722.500 V727.300 M274.300 719.900 V724.400 H279.400" fill="none" stroke="#aab0bc" stroke-width="1.700" stroke-linejoin="round"/>
<path d="M275.200 729.200 L283.800 737.700 M283.800 729.200 L275.200 737.700" stroke="#aab0bc" stroke-width="1.300" fill="none"/>

<!-- profile/output icons -->
<g transform="translate(76.1,785)" fill="none" stroke="#b2b8c2" stroke-width="1.6" stroke-linejoin="round" stroke-linecap="round">
<path d="M0.8 2.8 Q0.8 0.8 2.8 0.8 L6.6 0.8 Q7.6 0.8 8.2 1.8 L8.8 2.6 Q9.2 3.1 10 3.1 L16 3.1 Q18 3.1 18 5.1 L18 14.2 Q18 16.2 16 16.2 L2.8 16.2 Q0.8 16.2 0.8 14.2 Z"/>
<path d="M0.8 6.9 L18 6.9"/>
<path d="M9.3 7 L9.3 12.5" />
<path d="M6.3 10.4 L12.3 10.4 L9.3 13.8 Z" fill="#b2b8c2" stroke="none"/>
</g>
<g transform="translate(1015,832)" fill="none" stroke="#b2b8c2" stroke-width="1.6" stroke-linejoin="round" stroke-linecap="round">
<path d="M0.8 2.8 Q0.8 0.8 2.8 0.8 L6.6 0.8 Q7.6 0.8 8.2 1.8 L8.8 2.6 Q9.2 3.1 10 3.1 L16 3.1 Q18 3.1 18 5.1 L18 14.2 Q18 16.2 16 16.2 L2.8 16.2 Q0.8 16.2 0.8 14.2 Z"/>
<path d="M0.8 6.9 L18 6.9"/>
<path d="M9.3 7 L9.3 12.5" />
<path d="M6.3 10.4 L12.3 10.4 L9.3 13.8 Z" fill="#b2b8c2" stroke="none"/>
</g>
<path d="M1016.600 790.600 L1024 799 L1031.400 790.600" fill="none" stroke="#e0e3e8" stroke-width="1.400"/>

<!-- big convert icon -->
<g transform="translate(1253 817.9)"><path d="M-16.03 -2.36 A16.21 16.21 0 0 1 14.44 -7.36" fill="none" stroke="#ffffff" stroke-width="5.39"/><path d="M18.99 -13.89 L18.99 -2.36 L7.37 -2.36 Z" fill="#ffffff"/><g transform="rotate(180)"><path d="M-16.03 -2.36 A16.21 16.21 0 0 1 14.44 -7.36" fill="none" stroke="#ffffff" stroke-width="5.39"/><path d="M18.99 -13.89 L18.99 -2.36 L7.37 -2.36 Z" fill="#ffffff"/></g></g>
</svg>


</body></html>
